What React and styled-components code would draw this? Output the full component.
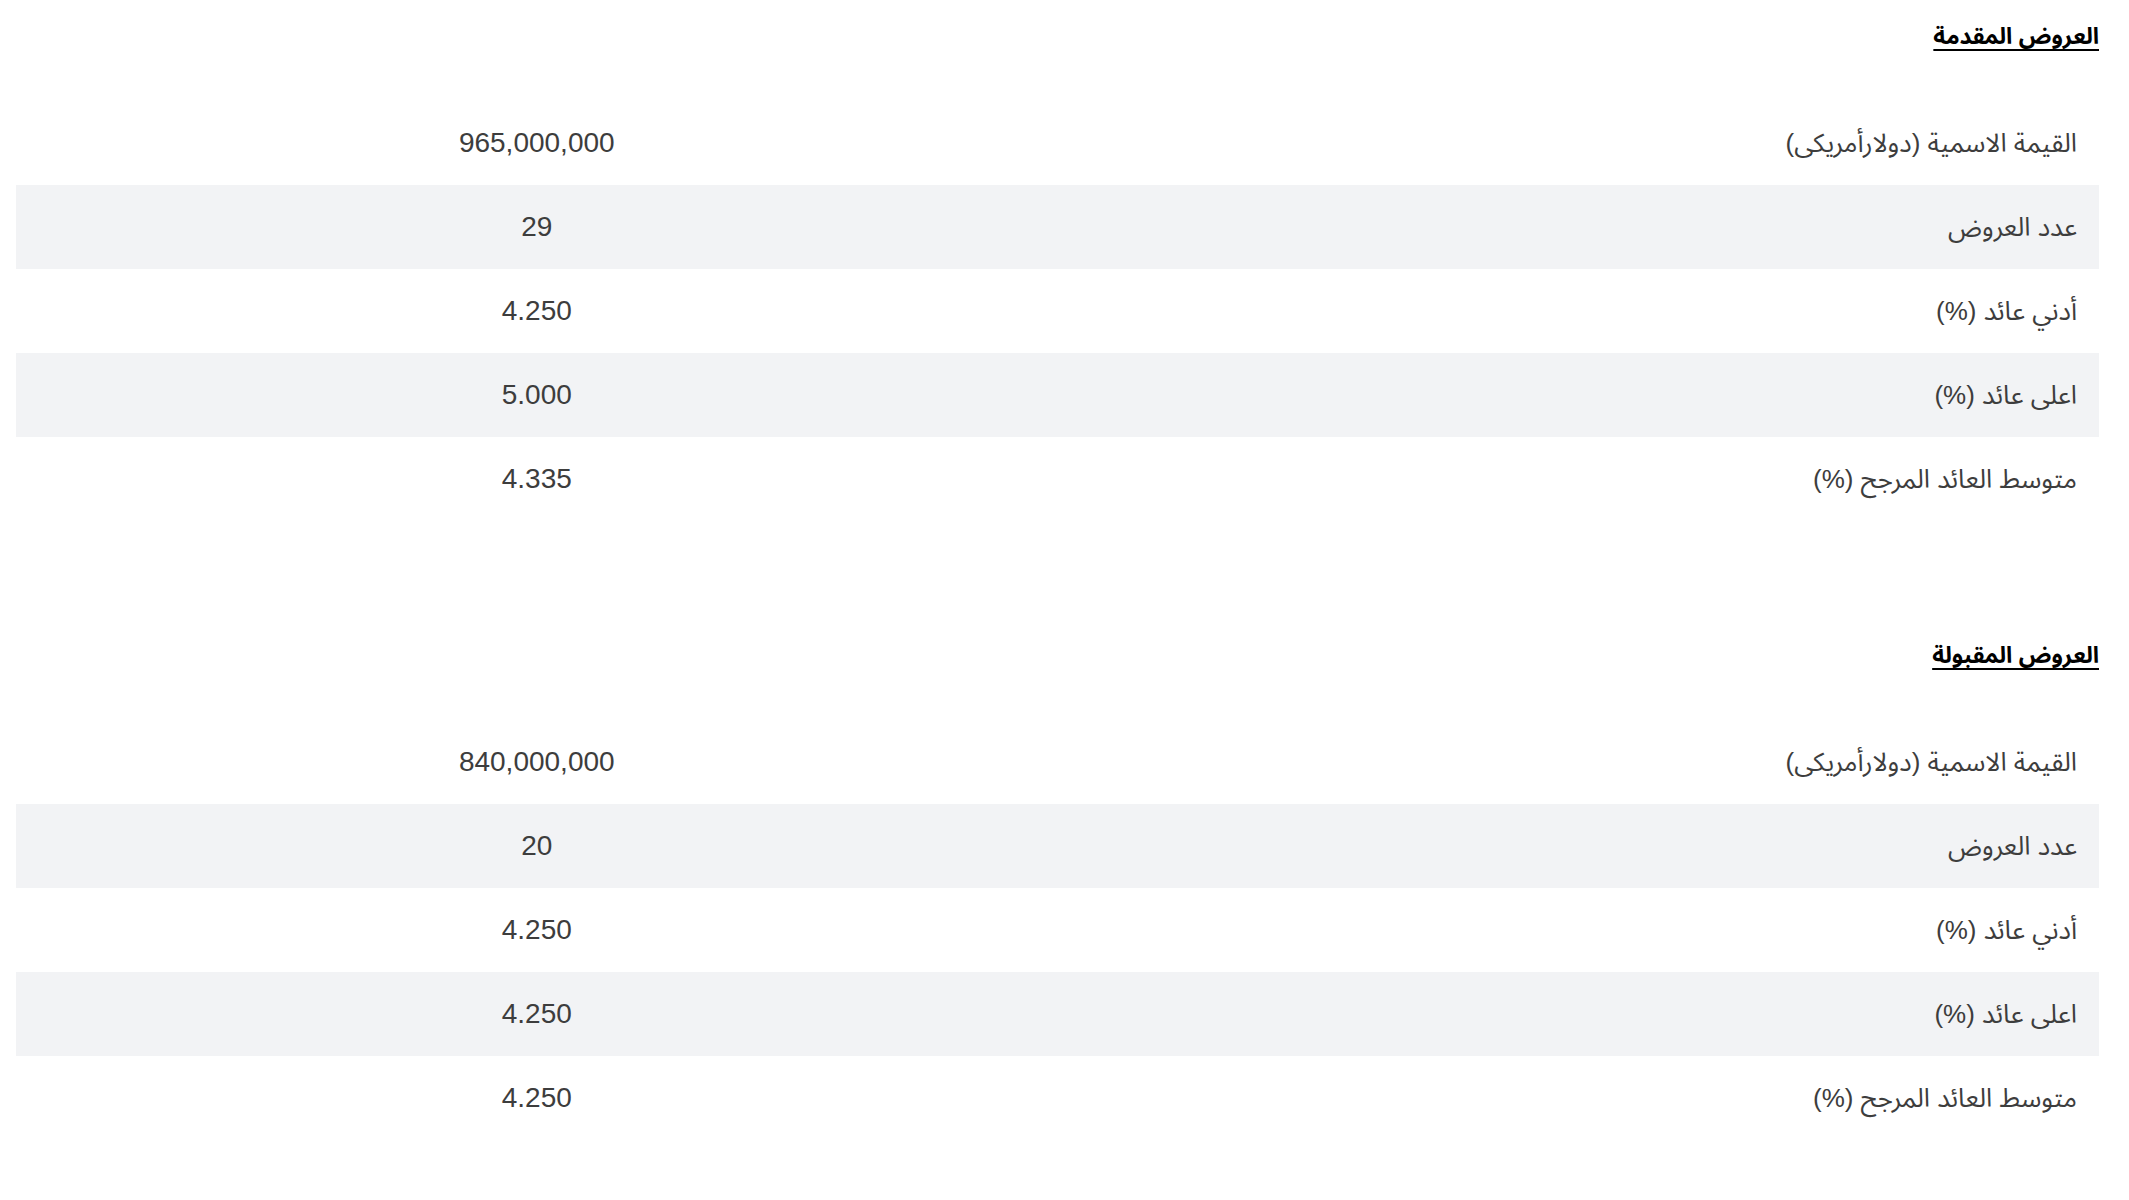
import React from "react";
import styled, { createGlobalStyle } from "styled-components";

const GlobalStyle = createGlobalStyle`
  html, body { margin: 0; padding: 0; background: #ffffff; }
  body {
    font-family: "Liberation Sans", "Noto Sans Arabic", "Noto Naskh Arabic", "DejaVu Sans", Arial, sans-serif;
  }
`;

const Page = styled.div`
  direction: rtl;
  padding: 0 30px 0 16px;
`;

const Section = styled.section`
  padding-top: ${(p) => p.$top}px;
`;

const Heading = styled.h3`
  margin: 0;
  height: 101px;
  padding-top: 20px;
  box-sizing: border-box;
  font-size: 23px;
  font-weight: bold;
  line-height: 32px;
  color: #000;
  text-decoration: underline;
  text-underline-offset: 5px;
  text-decoration-thickness: 2px;
`;

const Table = styled.div`
  display: flex;
  flex-direction: column;
`;

const Row = styled.div`
  display: grid;
  grid-template-columns: 1fr 1fr;
  height: 84px;
  align-items: center;
  background: ${(p) => (p.$striped ? "#f2f3f5" : "transparent")};
  color: #3d3d3d;
`;

const Label = styled.div`
  text-align: right;
  padding-right: 22px;
  font-size: 26px;
`;

const Value = styled.div`
  text-align: center;
  direction: ltr;
  font-size: 28px;
`;

const sections = [
  {
    title: "العروض المقدمة",
    top: 0,
    rows: [
      ["القيمة الاسمية (دولارأمريكى)", "965,000,000"],
      ["عدد العروض", "29"],
      ["أدني عائد (%)", "4.250"],
      ["اعلى عائد (%)", "5.000"],
      ["متوسط العائد المرجح (%)", "4.335"],
    ],
  },
  {
    title: "العروض المقبولة",
    top: 98,
    rows: [
      ["القيمة الاسمية (دولارأمريكى)", "840,000,000"],
      ["عدد العروض", "20"],
      ["أدني عائد (%)", "4.250"],
      ["اعلى عائد (%)", "4.250"],
      ["متوسط العائد المرجح (%)", "4.250"],
    ],
  },
];

export default function App() {
  return (
    <>
      <GlobalStyle />
      <Page>
        {sections.map((s) => (
          <Section key={s.title} $top={s.top}>
            <Heading>{s.title}</Heading>
            <Table>
              {s.rows.map(([label, value], i) => (
                <Row key={label} $striped={i % 2 === 1}>
                  <Label>{label}</Label>
                  <Value>{value}</Value>
                </Row>
              ))}
            </Table>
          </Section>
        ))}
      </Page>
    </>
  );
}
